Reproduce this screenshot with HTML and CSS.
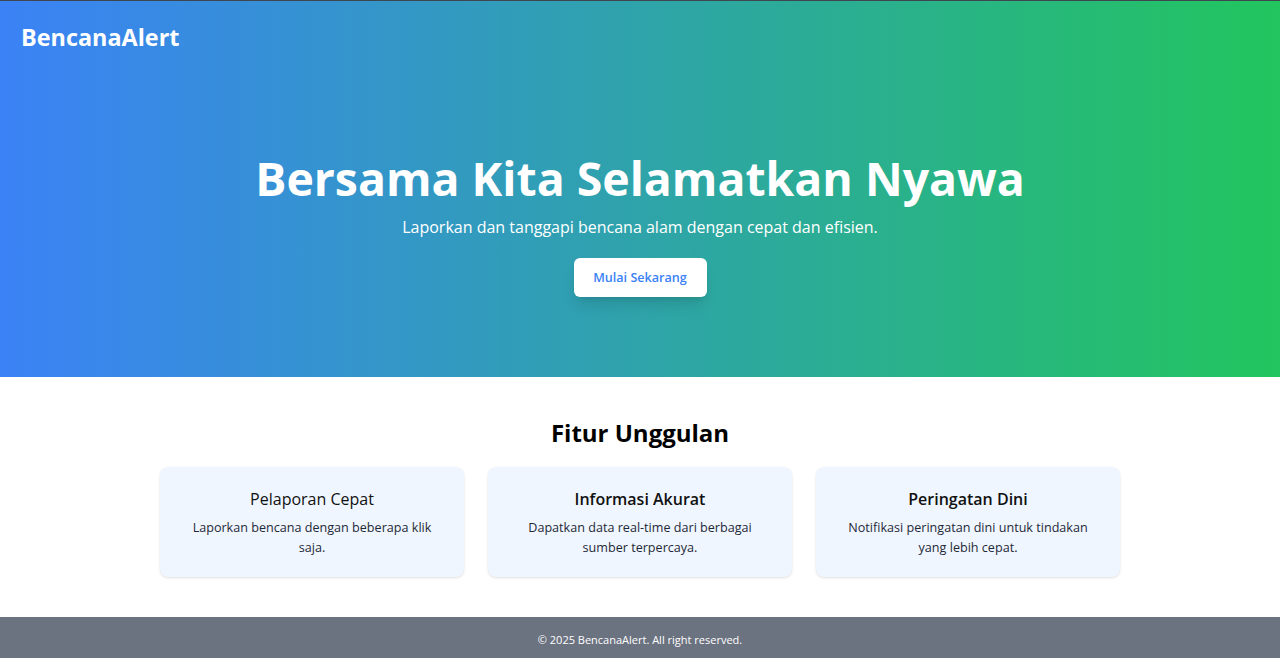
FILE: index.html
```html
<!DOCTYPE html>
<html lang="id">
<head>
<meta charset="utf-8">
<title>BencanaAlert</title>
<link rel="stylesheet" href="styles.css">
</head>
<body>
<header class="hero">
  <nav class="nav">
    <div class="brand">BencanaAlert</div>
  </nav>
  <div class="hero-content">
    <h1 class="hero-title">Bersama Kita Selamatkan Nyawa</h1>
    <p class="hero-sub">Laporkan dan tanggapi bencana alam dengan cepat dan efisien.</p>
    <a class="hero-btn" href="#">Mulai Sekarang</a>
  </div>
</header>
<main class="features">
  <h2 class="features-title">Fitur Unggulan</h2>
  <div class="cards">
    <div class="card">
      <h3 class="card-title card-title-light">Pelaporan Cepat</h3>
      <p class="card-text">Laporkan bencana dengan beberapa klik saja.</p>
    </div>
    <div class="card">
      <h3 class="card-title">Informasi Akurat</h3>
      <p class="card-text">Dapatkan data real-time dari berbagai sumber terpercaya.</p>
    </div>
    <div class="card">
      <h3 class="card-title">Peringatan Dini</h3>
      <p class="card-text">Notifikasi peringatan dini untuk tindakan yang lebih cepat.</p>
    </div>
  </div>
</main>
<footer class="footer">© 2025 BencanaAlert. All right reserved.</footer>
</body>
</html>
```

FILE: styles.css
```css
* { box-sizing: border-box; }
html, body { margin: 0; padding: 0; }
body {
  font-family: "Open Sans", "Noto Sans", sans-serif;
  color: #111827;
  background: #fff;
}
.hero {
  background: linear-gradient(to right, #3b82f6, #22c55e);
  color: #fff;
  height: 377px;
  border-top: 1px solid #3f4650;
}
.nav {
  padding: 20px 21px 0;
  height: 71px;
}
.brand {
  font-size: 23.4px;
  font-weight: 700;
  line-height: 32px;
}
.hero-content {
  display: flex;
  flex-direction: column;
  align-items: center;
  padding-top: 82px;
}
.hero-title {
  margin: 0 0 11px;
  font-size: 46.4px;
  line-height: 48px;
  font-weight: 700;
}
.hero-sub {
  margin: 0 0 17px;
  font-size: 16px;
  line-height: 28px;
}
.hero-btn {
  display: inline-flex;
  align-items: center;
  justify-content: center;
  width: 133px;
  height: 39px;
  background: #fff;
  color: #3b82f6;
  font-size: 12.6px;
  font-weight: 600;
  text-decoration: none;
  border-radius: 6px;
  box-shadow: 0 10px 15px -3px rgba(0,0,0,0.12), 0 4px 6px -4px rgba(0,0,0,0.1);
}
.features {
  padding: 40px 32px;
  max-width: 1024px;
  margin: 0 auto;
  text-align: center;
}
.features-title {
  margin: 0 0 18px;
  font-size: 24px;
  line-height: 32px;
  font-weight: 700;
  color: #000;
}
.cards {
  display: grid;
  grid-template-columns: repeat(3, 1fr);
  gap: 24px;
}
.card {
  background: #eff6ff;
  border-radius: 8px;
  padding: 18px 24px 19px;
  box-shadow: 0 1px 3px rgba(0,0,0,0.1), 0 1px 2px -1px rgba(0,0,0,0.08);
  height: 110px;
}
.card-title {
  margin: 0 0 5px;
  font-size: 16px;
  line-height: 28px;
  font-weight: 600;
  color: #111;
}
.card-title-light { font-weight: 400; }
.card-text {
  margin: 0;
  font-size: 12.6px;
  line-height: 20px;
  color: #1f2937;
}
.footer {
  background: #6b7280;
  color: #fff;
  text-align: center;
  font-size: 11px;
  line-height: 16px;
  padding: 15px 0 10px;
}
```
